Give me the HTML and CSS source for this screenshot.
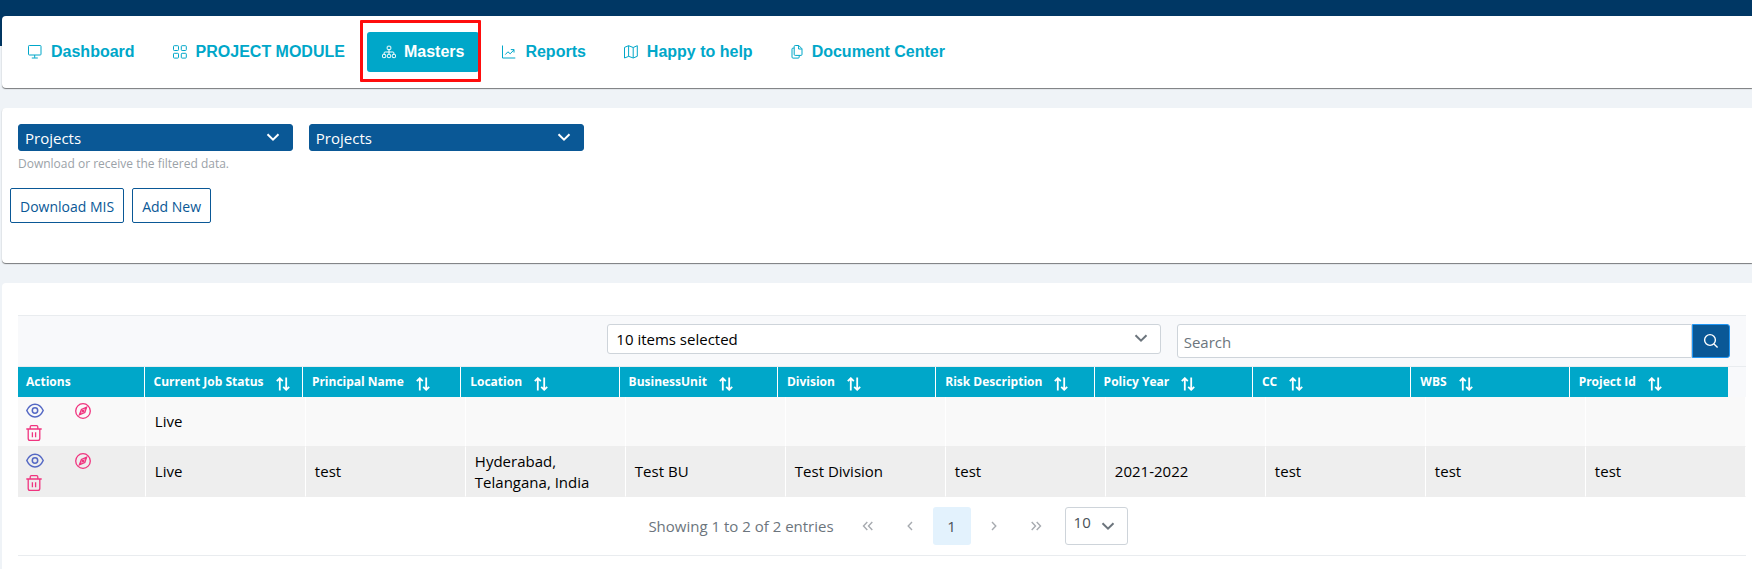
FILE: index.html
```html
<!DOCTYPE html>
<html lang="en">
<head>
<meta charset="utf-8">
<title>Masters - Projects</title>
<link rel="stylesheet" href="styles.css">
</head>
<body>
<svg class="sprite" aria-hidden="true">
  <symbol id="chevron" viewBox="0 0 14 14"><path d="M1.5 4.2 7 9.7l5.5-5.5"/></symbol>
  <symbol id="sort" viewBox="0 0 14 14"><path d="M3.8 13.6V1.2M.8 4.2l3-3 3 3M10.2.4v12.4M7.2 9.8l3 3 3-3"/></symbol>
  <symbol id="eye" viewBox="0 0 18 15"><path d="M.8 7.5C4.6-1 13.4-1 17.2 7.5 13.4 16 4.6 16 .8 7.5Z"/><circle cx="9" cy="7.5" r="2.7"/></symbol>
  <symbol id="compass" viewBox="0 0 16 16"><circle cx="8" cy="8" r="7.3"/><path d="M11.6 4.2 9.8 9.5 4.4 11.8 6.4 6.4Z"/><path d="M11.2 4.6 9.5 6.5M4.8 11.4 6.6 9.6"/><circle cx="8" cy="8" r=".9"/></symbol>
  <symbol id="trash" viewBox="0 0 16 16"><path d="M.3 4h15.4M2.2 4v9.4a1.9 1.9 0 0 0 1.9 1.9h7.8a1.9 1.9 0 0 0 1.9-1.9V4M4.2 4V1.9A1.2 1.2 0 0 1 5.4.7h5.2a1.2 1.2 0 0 1 1.2 1.2V4M6.4 7.2v5M9.6 7.2v5"/></symbol>
</svg>

<header class="banner">
  <nav class="card menu" aria-label="Main">
    <a class="tab" href="#"><svg class="tab-icon" viewBox="0 0 16 16"><rect x="1.5" y="1.5" width="12.5" height="9.5" rx=".8"/><path d="M7.7 11v2.8M4.8 14h6"/></svg>Dashboard</a>
    <a class="tab" href="#"><svg class="tab-icon" viewBox="0 0 16 16"><rect x="1.5" y="1.7" width="5" height="4.8" rx=".8"/><rect x="9.3" y="1.7" width="5" height="4.8" rx=".8"/><rect x="1.5" y="9.3" width="5" height="4.8" rx=".8"/><rect x="9.3" y="9.3" width="5" height="4.8" rx=".8"/></svg>PROJECT MODULE</a>
    <a class="tab active" href="#" aria-current="page"><svg class="tab-icon narrow" viewBox="1 0 14 16"><rect x="6.2" y="2.2" width="3.6" height="3.4" rx=".7"/><rect x="1.5" y="10.4" width="3.2" height="3.2" rx=".7"/><rect x="6.4" y="10.4" width="3.2" height="3.2" rx=".7"/><rect x="11.3" y="10.4" width="3.2" height="3.2" rx=".7"/><path d="M8 5.6v4.8M3.1 10.4V9q0-1 1-1h7.8q1 0 1 1v1.4"/></svg>Masters</a>
    <a class="tab" href="#"><svg class="tab-icon" viewBox="0 0 16 16"><path d="M1.5 1.5V14H14.3M4.3 10.6l2.6-2.8 2.3 2L13 5.8M9.8 5.6H13v3"/></svg>Reports</a>
    <a class="tab" href="#"><svg class="tab-icon" viewBox="0 0 16 16"><path d="M1.5 3.4 5.6 1.7v10.7L1.5 14ZM5.6 1.7l4.6 1.8v10.5l-4.6-1.7M10.2 3.5l4.1-1.8v10.6L10.2 14"/></svg>Happy to help</a>
    <a class="tab" href="#"><svg class="tab-icon narrow" viewBox="1 0 14 16"><path d="M6.2 1.5h3.6L13 4.8v5.6q0 1-1 1H6.2q-1 0-1-1V2.5q0-1 1-1ZM9.6 1.7V5h3.2M5.2 4.1H4q-1 0-1 1v8q0 1 1 1h5.2q1 0 1-1v-1.7"/></svg>Document Center</a>
  </nav>
</header>

<main class="content">
  <section class="card filters">
    <div class="filter-grid">
      <div class="field">
        <div class="picker solid">
          <select id="export-type" aria-describedby="export-help" aria-label="Export type"><option>Projects</option></select>
          <svg class="chevron"><use href="#chevron"/></svg>
        </div>
        <small class="help" id="export-help">Download or receive the filtered data.</small>
      </div>
      <div class="field">
        <div class="picker solid">
          <select aria-label="Master type"><option>Projects</option></select>
          <svg class="chevron"><use href="#chevron"/></svg>
        </div>
      </div>
    </div>
    <div class="actions">
      <button class="btn" type="button">Download MIS</button>
      <button class="btn" type="button">Add New</button>
    </div>
  </section>

  <section class="card listing">
    <div class="toolbar">
      <div class="picker columns">
        <select aria-label="Visible columns"><option>10 items selected</option></select>
        <svg class="chevron"><use href="#chevron"/></svg>
      </div>
      <form class="search">
        <input type="text" placeholder="Search" aria-label="Search">
        <button type="button" aria-label="Search"><svg viewBox="0 0 16 16"><circle cx="7" cy="7" r="5.4"/><path d="m11 11 3.6 3.4"/></svg></button>
      </form>
    </div>

    <table class="grid">
      <thead>
        <tr>
          <th>Actions</th>
          <th>Current Job Status<svg class="sort"><use href="#sort"/></svg></th>
          <th>Principal Name<svg class="sort"><use href="#sort"/></svg></th>
          <th>Location<svg class="sort"><use href="#sort"/></svg></th>
          <th>BusinessUnit<svg class="sort"><use href="#sort"/></svg></th>
          <th>Division<svg class="sort"><use href="#sort"/></svg></th>
          <th>Risk Description<svg class="sort"><use href="#sort"/></svg></th>
          <th>Policy Year<svg class="sort"><use href="#sort"/></svg></th>
          <th>CC<svg class="sort"><use href="#sort"/></svg></th>
          <th>WBS<svg class="sort"><use href="#sort"/></svg></th>
          <th>Project Id<svg class="sort"><use href="#sort"/></svg></th>
        </tr>
      </thead>
      <tbody>
        <tr>
          <td><div class="row-actions">
            <button class="view" type="button" aria-label="View"><svg><use href="#eye"/></svg></button>
            <button class="track" type="button" aria-label="Track"><svg><use href="#compass"/></svg></button>
            <button class="remove" type="button" aria-label="Delete"><svg><use href="#trash"/></svg></button>
          </div></td>
          <td>Live</td><td></td><td></td><td></td><td></td><td></td><td></td><td></td><td></td><td></td>
        </tr>
        <tr>
          <td><div class="row-actions">
            <button class="view" type="button" aria-label="View"><svg><use href="#eye"/></svg></button>
            <button class="track" type="button" aria-label="Track"><svg><use href="#compass"/></svg></button>
            <button class="remove" type="button" aria-label="Delete"><svg><use href="#trash"/></svg></button>
          </div></td>
          <td>Live</td><td>test</td><td>Hyderabad, Telangana, India</td><td>Test BU</td><td>Test Division</td><td>test</td><td>2021-2022</td><td>test</td><td>test</td><td>test</td>
        </tr>
      </tbody>
    </table>

    <div class="paginator">
      <span class="summary">Showing 1 to 2 of 2 entries</span>
      <button class="page faded" type="button" aria-label="First page"><svg viewBox="0 0 12 12"><path d="M5.3 2 1.5 6l3.8 4M10.3 2 6.5 6l3.8 4"/></svg></button>
      <button class="page faded" type="button" aria-label="Previous page"><svg viewBox="0 0 12 12"><path d="M8 2 4.2 6 8 10"/></svg></button>
      <button class="page current" type="button">1</button>
      <button class="page faded" type="button" aria-label="Next page"><svg viewBox="0 0 12 12"><path d="M4 2l3.8 4L4 10"/></svg></button>
      <button class="page faded" type="button" aria-label="Last page"><svg viewBox="0 0 12 12"><path d="M1.7 2l3.8 4-3.8 4M6.7 2l3.8 4-3.8 4"/></svg></button>
      <div class="picker rows">
        <select aria-label="Rows per page"><option>10</option></select>
        <svg class="chevron"><use href="#chevron"/></svg>
      </div>
    </div>
  </section>
</main>
</body>
</html>
```
FILE: styles.css
```css
* { box-sizing: border-box; }

body {
  margin: 0;
  min-height: 100vh;
  display: flex;
  flex-direction: column;
  background: #eff3f7;
  color: #000;
  font-family: "Open Sans", "Noto Sans", sans-serif;
  font-size: 15px;
  line-height: 21px;
}

button, input, select { font: inherit; margin: 0; }
svg { fill: none; stroke: currentColor; flex: none; }
.sprite { position: absolute; width: 0; height: 0; }

.card {
  background: #fff;
  border-radius: 4px 0 0 4px;
  box-shadow: 0 1px 1px rgba(0, 0, 0, 0.5);
}

/* Top navigation */
.banner {
  padding: 16px 0 0 2px;
  background: linear-gradient(#003764 46px, transparent 46px);
}

.menu {
  display: flex;
  gap: 7px;
  padding: 16px 10px;
}

.tab {
  position: relative;
  display: flex;
  align-items: center;
  gap: 8px;
  height: 40px;
  padding: 0 15px;
  border-radius: 3px;
  color: #00a7c9;
  font: bold 16px "Liberation Sans", Arial, sans-serif;
  text-decoration: none;
}

.tab-icon { width: 16px; height: 16px; }
.tab-icon.narrow { width: 14px; }
.tab.active { background: #00a7c9; color: #fff; }

.tab.active::after {
  content: "";
  position: absolute;
  inset: -12px -2px -10px -7px;
  border: 3px solid #ff0d0d;
  border-radius: 1px;
}

.content {
  flex: 1;
  display: flex;
  flex-direction: column;
  gap: 20px;
  padding: 20px 0 0 2px;
}

/* Filters */
.filters { padding: 16px 5px 40px 8px; }

.filter-grid {
  display: grid;
  grid-template-columns: repeat(6, 1fr);
  gap: 16px;
  padding-left: 8px;
}

.picker {
  position: relative;
  border: 1px solid #ced4da;
  border-radius: 3px;
  background: #fff;
}

.picker select {
  display: block;
  width: 100%;
  height: 100%;
  border: 0;
  background: none;
  color: inherit;
  appearance: none;
}

.chevron {
  position: absolute;
  right: 12px;
  top: 6px;
  width: 14px;
  height: 14px;
  stroke-width: 2;
  pointer-events: none;
}

.picker.solid {
  height: 27px;
  background: #0a5896;
  border-color: #0a5896;
  color: #fff;
}
.picker.solid select { padding: 1px 6px 0; }
.picker.solid .chevron { top: 5px; }
.solid option { color: #000; }

.help {
  display: block;
  margin-top: 4px;
  color: #9ba2a8;
  font-size: 12px;
  line-height: 18px;
}

.actions { display: flex; gap: 8px; margin-top: 15px; }

.btn {
  height: 35px;
  padding: 1px 9px 0;
  border: 1px solid #0a5896;
  border-radius: 2px;
  background: #fff;
  color: #0a5896;
  font-size: 14px;
}

/* Listing */
.listing {
  flex: 1;
  padding: 32px 6px 0 16px;
  border-radius: 4px 0 0 0;
  box-shadow: none;
}

.toolbar {
  display: grid;
  grid-template-columns: repeat(3, 1fr);
  align-items: start;
  gap: 16px;
  padding: 8px 16px 8px 20px;
  background: #f8f9fb;
  border: solid #e9ecef;
  border-width: 1px 0;
}

.columns { grid-column: 2; height: 30px; }
.columns select { padding: 0 8px; }
.columns .chevron, .rows .chevron { color: #6c757d; }

.search { display: flex; height: 34px; }

.search input {
  flex: 1;
  min-width: 0;
  padding: 2px 6px 0;
  border: 1px solid #ced4da;
  border-radius: 3px 0 0 3px;
  background: #fff;
}
.search input::placeholder { color: #6c757d; opacity: 1; }

.search button {
  display: grid;
  place-items: center;
  width: 38px;
  padding: 0;
  border: 1px solid #2196f3;
  border-radius: 0 3px 3px 0;
  background: #0a5896;
  color: #fff;
}
.search svg { width: 16px; height: 16px; stroke-width: 1.4; }

.grid { display: block; background: #f8f9fb; }

.grid thead, .grid tbody {
  display: table;
  width: 100%;
  table-layout: fixed;
  border-collapse: separate;
  border-spacing: 0;
}
.grid thead { width: calc(100% - 18px); }

.grid th, .grid td { text-align: left; border-right: 1px solid #fff; }
.grid th:first-child, .grid td:first-child { width: 7.4%; padding-left: 8px; }

.grid th {
  height: 30px;
  padding: 0 9px;
  background: #00a7c9;
  color: #fff;
  font-size: 12px;
  font-weight: 700;
  line-height: 18px;
  white-space: nowrap;
}
.grid th:last-child { border-right: 0; }

.sort {
  width: 14px;
  height: 14px;
  margin-left: 12px;
  vertical-align: -5px;
  stroke-width: 1.8;
}

.grid td {
  height: 50px;
  padding: 2px 9px;
  border-bottom: 1px solid #eee;
}
.grid tbody tr:nth-child(odd) { background: #f9f9f9; }
.grid tbody tr:nth-child(even) { background: #eee; }

.row-actions {
  display: grid;
  grid-template-columns: 49px 24px;
  grid-template-rows: 22px 22px;
  align-items: center;
}

.row-actions button {
  display: flex;
  padding: 0;
  border: 0;
  background: none;
  color: #f0347f;
}
.row-actions svg { width: 16px; height: 16px; stroke-width: 1.3; }
.row-actions .view { color: #5468c4; }
.row-actions .view svg { width: 18px; height: 15px; stroke-width: 1.5; }
#compass circle:last-child { fill: currentColor; }

/* Paginator */
.paginator {
  display: flex;
  justify-content: center;
  align-items: center;
  gap: 4px;
  padding: 10px 0 10px 12px;
  border-bottom: 1px solid #e9ecef;
  color: #6c757d;
}

.summary { margin-right: 11px; }

.page {
  display: grid;
  place-items: center;
  width: 38px;
  height: 38px;
  padding: 0;
  border: 0;
  border-radius: 3px;
  background: none;
  color: #495057;
}
.page svg { width: 12px; height: 12px; stroke-width: 1.4; }
.page.faded { color: #a7abb0; }
.page.current { background: #e3f2fd; }

.rows { width: 63px; height: 38px; margin-left: 6px; }
.rows select { padding: 0 8px 8px; color: #495057; }
.rows .chevron { top: 11px; }
```
